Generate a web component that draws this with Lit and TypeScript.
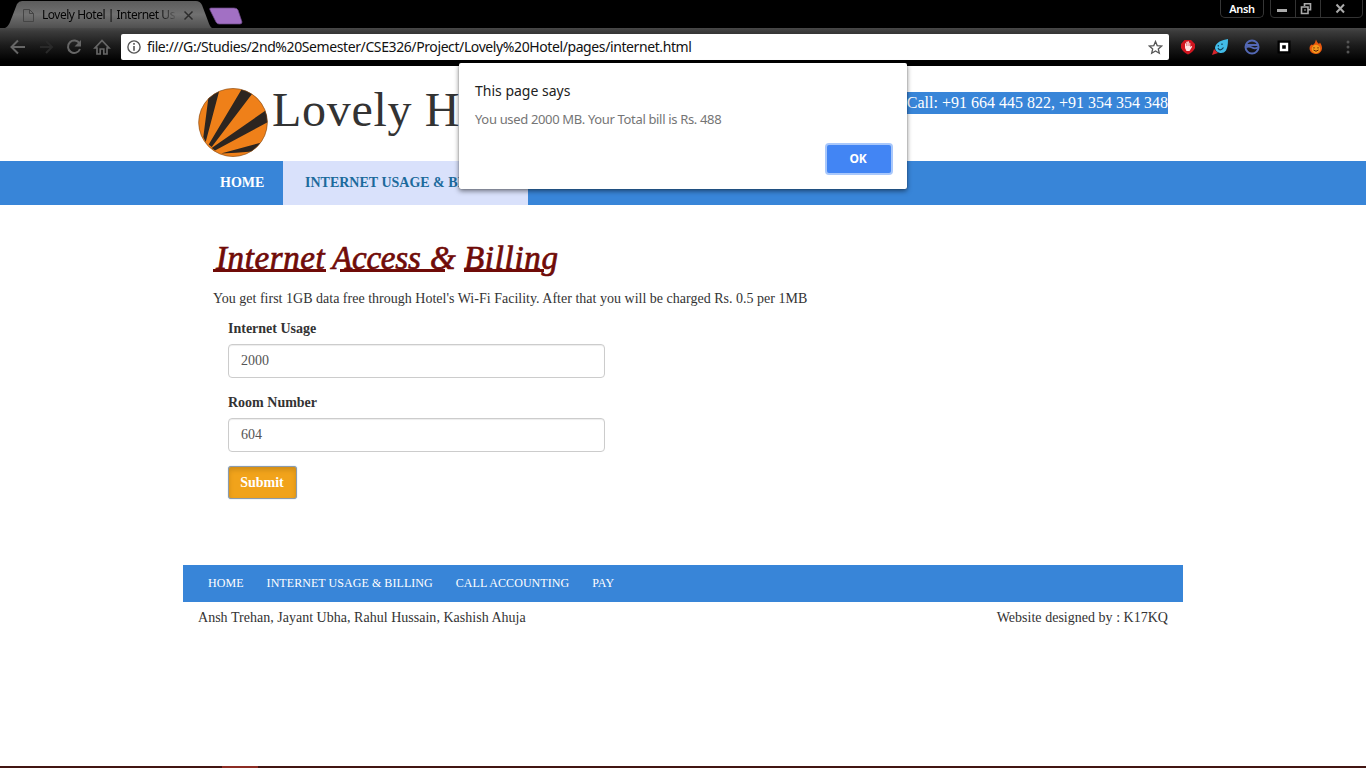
import { LitElement, html, css } from "lit";
import { customElement } from "lit/decorators.js";

@customElement("browser-chrome")
class BrowserChrome extends LitElement {
  static styles = css`
    :host { display: block; height: 66px; background: #000; font-family: "Noto Sans", sans-serif; }
    svg { display: block; flex: none; }
    .strip { display: flex; height: 28px; align-items: flex-start; }
    .tab { position: relative; width: 207px; height: 28px; margin-left: 5px; }
    .shape { position: absolute; inset: 0; }
    .label { position: relative; display: flex; align-items: center; height: 28px; padding: 2px 0 0 18px; box-sizing: border-box; }
    .title { width: 136px; margin-left: 8px; overflow: hidden; white-space: nowrap; font-size: 12px; letter-spacing: -0.48px; color: #050505;
      -webkit-mask-image: linear-gradient(90deg, #000 86%, transparent 100%); mask-image: linear-gradient(90deg, #000 86%, transparent 100%); }
    .close { margin-left: 5px; }
    .plus { margin: 7px auto 0 -3px; }
    .user { width: 42px; height: 17px; border: 1px solid #363636; border-top: 0; border-radius: 0 0 5px 5px; color: #fff; font-size: 11px; font-weight: 600; letter-spacing: -0.4px; line-height: 18px; text-align: center; }
    .win { margin: 0 3px 0 6px; }
    .bar { display: flex; align-items: center; height: 38px; background: linear-gradient(#484848 0, #3a3a3a 10%, #1c1c1c 45%, #000 88%); }
    .nav { display: flex; gap: 10px; padding-left: 9px; width: 121px; box-sizing: border-box; }
    .url { display: flex; align-items: center; box-sizing: border-box; width: 1048px; height: 26px; padding: 0 6px; background: #fff; border-radius: 2px; }
    .path { flex: 1; margin-left: 6px; font-size: 14px; line-height: 26px; letter-spacing: -0.4px; color: #111; white-space: nowrap; }
    .ext { display: flex; align-items: center; padding-left: 10px; gap: 14px; }
  `;
  render() {
    return html`
      <div class="strip">
        <div class="tab">
          <svg class="shape" width="207" height="28" viewBox="0 0 207 28">
            <defs><linearGradient id="g" x2="0" y2="1"><stop stop-color="#5c5c5c"/><stop offset=".5" stop-color="#707070"/><stop offset="1" stop-color="#505050"/></linearGradient></defs>
            <path d="M0 28C4 26 5 22 7 17L12 4Q14 1 17 1H191Q195 1 197 5L203 21Q205 27 207 28Z" fill="url(#g)"/>
          </svg>
          <div class="label">
            <svg width="11" height="13" viewBox="0 0 11 13" fill="none" stroke="#454545"><path d="M.5 .5H6.5L10.5 4.5V12.5H.5ZM6.5 .5V4.5H10.5"/></svg>
            <span class="title">Lovely Hotel | Internet Us</span>
            <svg class="close" width="11" height="11" viewBox="0 0 11 11" stroke="#2c2c2c" stroke-width="1.5"><path d="M1.5 1.5 9.5 9.5M9.5 1.5 1.5 9.5"/></svg>
          </div>
        </div>
        <svg class="plus" width="34" height="18" viewBox="0 0 34 18"><path d="M2 1H25Q28 1 29 3L33 15Q33 17 31 17H10Q8 17 7 15L1 3Q0 1 2 1Z" fill="#a270c4" stroke="#6c4886" stroke-width=".7"/></svg>
        <div class="user">Ansh</div>
        <svg class="win" width="93" height="18" viewBox="0 0 93 18" fill="none">
          <path d="M.5 0V14Q.5 17.5 4 17.5H88Q92.5 17.5 92.5 13V0M25.5 0V17M50.5 0V17" stroke="#333"/>
          <path d="M7 10.5H17" stroke="#aaa" stroke-width="3"/>
          <path d="M31.5 7H38V13.5H31.5ZM34.5 6V3.7H40.5V9.7H38" stroke="#aaa" stroke-width="1.6"/>
          <path d="M34 10H36" stroke="#aaa"/>
          <path d="M66.5 4.5 74 12.5M74 4.5 66.5 12.5" stroke="#aaa" stroke-width="2"/>
        </svg>
      </div>
      <div class="bar">
        <div class="nav">
          <svg width="18" height="18" viewBox="0 0 18 18" fill="none" stroke="#666" stroke-width="2"><path d="M16 9H3M9 2.5 2.5 9 9 15.5"/></svg>
          <svg width="18" height="18" viewBox="0 0 18 18" fill="none" stroke="#292929" stroke-width="2"><path d="M3 9H15M9 3 15 9 9 15"/></svg>
          <svg width="18" height="18" viewBox="0 0 18 18" fill="none"><path d="M14.5 5.5A6.2 6.2 0 1 0 15 11" stroke="#666" stroke-width="2"/><path d="M16 2V8.5H9.5Z" fill="#666"/></svg>
          <svg width="18" height="18" viewBox="0 0 18 18" fill="none" stroke="#666" stroke-width="1.7"><path d="M4 10V16H7.2V11H10.8V16H14V10H16L9 2.5 2 10Z"/></svg>
        </div>
        <div class="url">
          <svg width="14" height="14" viewBox="0 0 14 14" fill="none" stroke="#555"><circle cx="7" cy="7" r="6.1" stroke-width="1.4"/><path d="M7 6V10.8M7 3V4.7" stroke-width="1.6"/></svg>
          <span class="path">file:///G:/Studies/2nd%20Semester/CSE326/Project/Lovely%20Hotel/pages/internet.html</span>
          <svg width="15" height="15" viewBox="0 0 15 15" fill="none" stroke="#555" stroke-width="1.3"><path d="M7.5 1.5 9.2 5.6 13.7 6 10.3 8.9 11.3 13.2 7.5 10.9 3.7 13.2 4.7 8.9 1.3 6 5.8 5.6Z"/></svg>
        </div>
        <div class="ext">
          <svg width="18" height="18" viewBox="0 0 18 18"><path d="M5.5 2H12L16 6V10Q14 14 9 16.5 4 14 2 10V6Z" fill="#cf1620"/><path d="M6 10V5.5Q6.7 4.8 7.3 5.5V4Q8 3.2 8.7 4V3.5Q9.5 2.8 10 3.7V5Q10.8 4.3 11.3 5V9L12.5 8Q13.5 8 13 9L10.5 13H7.5Z" fill="#ffe5e5"/><path d="M7.5 5V8M9 4V8M10.3 5V8" stroke="#cf1620" stroke-width=".4"/></svg>
          <svg width="18" height="18" viewBox="0 0 18 18"><path d="M1 17 3 11 7 15Z" fill="#d6252c"/><path d="M17 1Q17 9 15 12.5C12 17 4 15 4 9.5 5 4 11 2 17 1Z" fill="#42bce8"/><path d="M7 10Q9 14 12.5 9.5M7.3 7V8.5M11 5.5V7" stroke="#123e58" stroke-width="1.2" fill="none"/></svg>
          <svg width="18" height="18" viewBox="0 0 18 18" fill="none" stroke="#5368b5" stroke-width="2"><circle cx="9" cy="9" r="6.5"/><path d="M3 7H15M3 9.3Q6 7.8 9 9.6T15 9.3" stroke-width="1.8"/></svg>
          <svg width="18" height="18" viewBox="0 0 18 18"><path d="M2.5 2.5H15.5V15.5H2.5Z" fill="#000"/><path d="M6 6H12V12H6Z" fill="#000" stroke="#fff" stroke-width="2.4"/></svg>
          <svg width="18" height="18" viewBox="0 0 18 18"><path d="M9 1.5Q9.5 4 12 6L13 4.5Q16 9 14.5 12.5 12.5 16 9 16C4 16 1.5 12 3 8L4.5 6.5 6 7Q8.5 5 9 1.5Z" fill="#e9590e"/><circle cx="9" cy="11" r="4.3" fill="#f49a1c"/><path d="M7 9.2V10.5M11 9.2V10.5M6.5 12Q9 14.5 11.5 12" stroke="#5b1c07" fill="none"/></svg>
          <svg width="18" height="18" viewBox="0 0 18 18" fill="#555"><circle cx="9" cy="4" r="1.5"/><circle cx="9" cy="9" r="1.5"/><circle cx="9" cy="14" r="1.5"/></svg>
        </div>
      </div>
    `;
  }
}

@customElement("page-dialog")
class PageDialog extends LitElement {
  static styles = css`
    :host { display: flex; flex-direction: column; box-sizing: border-box; padding: 17px 16px 16px; background: #fff; border-radius: 2px;
      box-shadow: 0 0 1px rgba(0,0,0,.6), 0 2px 5px rgba(0,0,0,.5); font-family: "Noto Sans", sans-serif; white-space: nowrap; }
    .head { font-size: 14px; line-height: 22px; letter-spacing: 0; color: #222; }
    .msg { margin-top: 8px; font-size: 13px; line-height: 18px; letter-spacing: -.34px; color: #757575; }
    .ok { align-self: flex-end; width: 64px; height: 28px; margin: 17px 0 0; border: 0; padding: 0 2px 0 0; border-radius: 2px; background: #4285f4; box-shadow: 0 0 0 2px #a9c8fb; color: #fff; font: 700 12px/28px "Noto Sans", sans-serif; letter-spacing: -.3px; }
  `;
  render() {
    return html`
      <div class="head">This page says</div>
      <div class="msg">You used 2000 MB. Your Total bill is Rs. 488</div>
      <button class="ok">OK</button>
    `;
  }
}

@customElement("app-root")
class AppRoot extends LitElement {
  static styles = css`
    :host { display: flex; flex-direction: column; position: relative; width: 1366px; height: 768px; overflow: hidden; background: #fff; color: #333;
      font: 14px/20px "Liberation Serif", serif; white-space: nowrap; }
    .wrap { width: 970px; margin: 0 auto; }
    .header { display: flex; align-items: flex-start; height: 95px; }
    .logo { display: block; margin: 22px 4px 0 0; }
    .brand { margin: 17px auto 0 0; font-size: 48px; line-height: 54px; font-weight: 400; letter-spacing: .7px; }
    .call { margin-top: 26px; padding-left: 2px; background: #3885d8; color: #fff; font-size: 16px; line-height: 22px; }
    .menu { background: #3885d8; height: 44px; flex: none; font-weight: 700; line-height: 43px; color: #fff; }
    .items { display: flex; }
    .home { width: 85px; box-sizing: border-box; padding-left: 22px; font-size: 14px; }
    .active { width: 245px; height: 44px; box-sizing: border-box; padding-left: 22px; background: #d9e1fb; color: #1c6a9c; }
    .main { width: 940px; height: 360px; margin: 0 auto; display: flex; flex-direction: column; align-items: flex-start; }
    .title { display: flex; margin: 33px 0 0; height: 40px; font: italic 400 33px/41px "Liberation Serif", serif; color: #700b08; -webkit-text-stroke: .7px #700b08; }
    .title span { box-sizing: border-box; white-space: pre; background: linear-gradient(#700b08, #700b08) no-repeat 0 31px / 100% 3px; }
    .title .w1 { width: 119px; padding-left: 3px; letter-spacing: .6px; background-size: 113px 3px; }
    .title .w2 { width: 98px; letter-spacing: -.2px; background-position: 8px 31px; }
    .title .w3 { width: 34px; background-size: 15px 3px; }
    .title .w4 { letter-spacing: .7px; background-position: -7px 31px; background-size: 87px 3px; }
    .intro { margin: 11px 0 0; letter-spacing: .01px; }
    .form { display: flex; flex-direction: column; align-items: flex-start; padding: 10px 0 0 15px; }
    .lab { font-weight: 700; margin-bottom: 5px; }
    .field { box-sizing: border-box; width: 377px; height: 34px; margin: 0 0 15px; padding: 6px 12px; border: 1px solid #ccc; border-radius: 4px; box-shadow: inset 0 1px 1px rgba(0,0,0,.075); color: #555; font: 14px/20px "Liberation Serif", serif; }
    .submit { width: 69px; height: 33px; margin-top: -1px; padding: 0 1px 0 0; border: 1px solid #8b9bad; border-radius: 3px; background: #f1a31b; color: #fff; font: 700 14px/20px "Liberation Serif", serif; box-shadow: inset 0 3px 5px rgba(0,0,0,.14), 0 0 1px #6f9fd0; }
    .foot { display: flex; gap: 23px; box-sizing: border-box; width: 1000px; height: 37px; margin: 0 auto; padding-left: 25px; background: #3885d8; color: #fff; font-size: 12px; line-height: 36px; letter-spacing: .06px; }
    .credits { display: flex; justify-content: space-between; padding-top: 6px; flex: 1; letter-spacing: .02px; }
    .edge { height: 2px; background: linear-gradient(90deg, #421512 222px, #8c2c24 222px 258px, #421512 258px); }
    .dialog { position: absolute; left: 459px; top: 63px; width: 448px; height: 126px; }
  `;
  render() {
    return html`
      <browser-chrome></browser-chrome>
      <div class="wrap header">
        <svg class="logo" width="70" height="69" viewBox="0 0 70 69">
          <defs><clipPath id="disc"><ellipse cx="35" cy="34.5" rx="34.5" ry="34.2"/></clipPath></defs>
          <g clip-path="url(#disc)"><path d="M0 0H70V69H0Z" fill="#ef8019"/>
          <path d="M11 5 22 0 7.7 54 5.3 49ZM45-1 54 6 13.7 59 10.7 56.5ZM69 21.5 70 34 17 62.5 13.7 60ZM63.5 54.5 54 63.5Q38 65 23 65.5Z" fill="#2c2520"/></g>
          <ellipse cx="35" cy="34.5" rx="34.3" ry="34" fill="none" stroke="#7d4a1d" stroke-width=".6"/>
        </svg>
        <h1 class="brand">Lovely Hotel</h1>
        <div class="call">Call: +91 664 445 822, +91 354 354 348</div>
      </div>
      <div class="menu"><div class="wrap items"><div class="home">HOME</div><div class="active">INTERNET USAGE &amp; BILLING</div></div></div>
      <div class="main">
        <h2 class="title"><span class="w1">Internet </span><span class="w2">Access </span><span class="w3">&amp; </span><span class="w4">Billing</span></h2>
        <p class="intro">You get first 1GB data free through Hotel's Wi-Fi Facility. After that you will be charged Rs. 0.5 per 1MB</p>
        <div class="form">
          <label class="lab">Internet Usage</label>
          <input class="field" .value=${"2000"} />
          <label class="lab">Room Number</label>
          <input class="field" .value=${"604"} />
          <button class="submit">Submit</button>
        </div>
      </div>
      <div class="foot"><span>HOME</span><span>INTERNET USAGE &amp; BILLING</span><span>CALL ACCOUNTING</span><span>PAY</span></div>
      <div class="wrap credits"><span>Ansh Trehan, Jayant Ubha, Rahul Hussain, Kashish Ahuja</span><span>Website designed by : K17KQ</span></div>
      <div class="edge"></div>
      <page-dialog class="dialog"></page-dialog>
    `;
  }
}
